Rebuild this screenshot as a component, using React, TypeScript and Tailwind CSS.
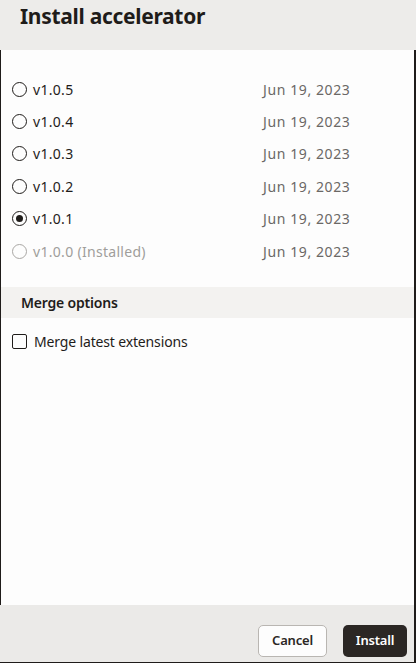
import React from "react";

const versions = [
  { v: "v1.0.5", checked: false, disabled: false },
  { v: "v1.0.4", checked: false, disabled: false },
  { v: "v1.0.3", checked: false, disabled: false },
  { v: "v1.0.2", checked: false, disabled: false },
  { v: "v1.0.1", checked: true, disabled: false },
  { v: "v1.0.0 (Installed)", checked: false, disabled: true },
];

function Radio({ checked, disabled }: { checked: boolean; disabled: boolean }) {
  return (
    <span
      className={
        "flex h-[15px] w-[15px] shrink-0 items-center justify-center rounded-full border-[1.5px] " +
        (disabled ? "border-[#a9a7a4]" : "border-[#1f1c1a]")
      }
    >
      {checked && <span className="h-[7px] w-[7px] rounded-full bg-[#1f1c1a]" />}
    </span>
  );
}

export default function App() {
  return (
    <div
      className="flex h-[663px] w-[416px] flex-col overflow-hidden bg-white text-[#1f1c1a]"
      style={{ fontFamily: '"Noto Sans", "Open Sans", sans-serif' }}
    >
      <div className="h-[50px] shrink-0 bg-[#edecea] pl-5 pt-[1px]">
        <h1 className="text-[21px] font-bold leading-[30px] tracking-[-0.3px] text-[#1f1c1a]">
          Install accelerator
        </h1>
      </div>
      <div className="flex flex-1 flex-col border-l border-r-2 border-[#1f1c1a] bg-[#fdfdfd]">
        <div className="flex flex-col pt-[23px]">
          {versions.map((r) => (
            <div key={r.v} className="flex h-[32.4px] items-center pl-[11px]">
              <Radio checked={r.checked} disabled={r.disabled} />
              <span
                className={
                  "ml-[6px] w-[230px] text-[14px] tracking-[0.3px] " +
                  (r.disabled ? "text-[#a09e9b]" : "text-[#1f1c1a]")
                }
              >
                {r.v}
              </span>
              <span className="text-[14px] tracking-[0.6px] text-[#6b6866]">Jun 19, 2023</span>
            </div>
          ))}
        </div>
        <div className="mt-[20px] flex h-[31px] items-center bg-[#f3f2f0] pl-5">
          <span className="text-[14px] font-semibold tracking-[-0.2px] text-[#1f1c1a]">Merge options</span>
        </div>
        <div className="flex h-[47px] items-center pl-[11px]">
          <span className="h-[15px] w-[15px] shrink-0 rounded-[2px] border-[1.5px] border-[#1f1c1a]" />
          <span className="ml-[7px] text-[14px] tracking-[-0.15px] text-[#1f1c1a]">Merge latest extensions</span>
        </div>
      </div>
      <div className="flex h-[58px] shrink-0 items-center justify-end gap-4 border-b border-r-2 border-[#1f1c1a] bg-[#ebeae8] pr-[7px] pt-[14px]">
        <button className="h-[32px] w-[69px] rounded-[5px] border border-[#b9b6b2] bg-[#fdfdfd] text-[13px] font-semibold tracking-[-0.2px] text-[#2b2724]">
          Cancel
        </button>
        <button className="h-[32px] w-[64px] rounded-[5px] bg-[#2b2724] text-[13px] font-semibold tracking-[-0.2px] text-white">
          Install
        </button>
      </div>
    </div>
  );
}
